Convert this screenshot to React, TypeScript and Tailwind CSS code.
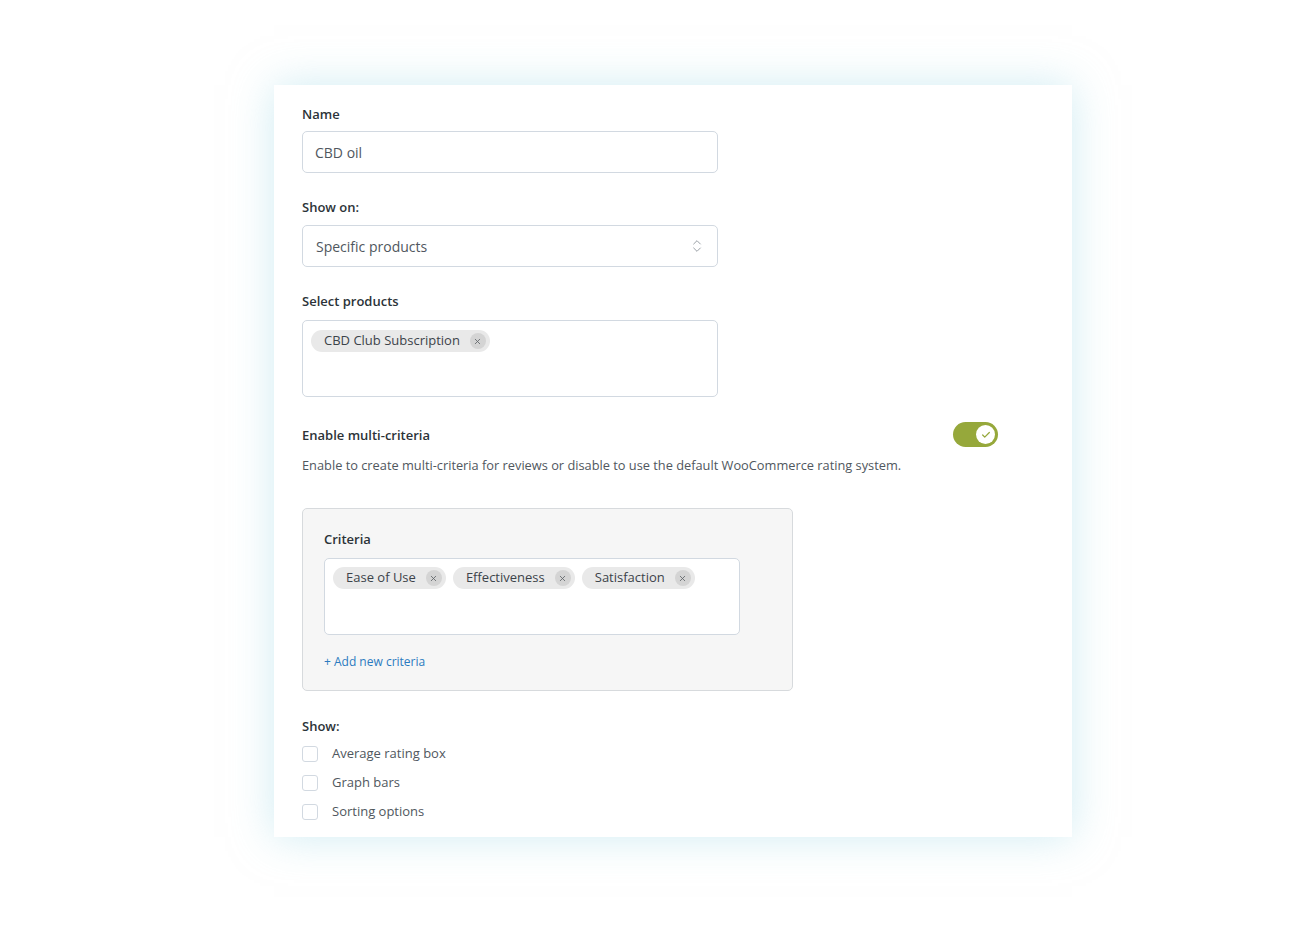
import { Check, ChevronsUpDown, X } from 'lucide-react';

const font = { fontFamily: '"Open Sans", "Noto Sans", sans-serif' };

function Chip({ label }: { label: string }) {
  return (
    <span className="inline-flex h-[22px] items-center rounded-full bg-[#e9e9e9] pl-[13px] pr-[4px] text-[13px] text-[#3c434a]">
      {label}
      <span className="ml-[10px] flex h-[16px] w-[16px] items-center justify-center rounded-full bg-[#d4d4d4] text-[#5f6367]">
        <X className="h-[9px] w-[9px]" strokeWidth={2.2} />
      </span>
    </span>
  );
}

function FieldLabel({ children }: { children: React.ReactNode }) {
  return <div className="h-[18px] text-[13px] font-semibold leading-[18px] text-[#2c3338]">{children}</div>;
}

export default function App() {
  const criteria = ['Ease of Use', 'Effectiveness', 'Satisfaction'];
  const showOptions = ['Average rating box', 'Graph bars', 'Sorting options'];

  return (
    <div className="min-h-[929px] bg-white pt-[85px]" style={font}>
      <div className="ml-[274px] w-[798px] bg-white px-[28px] pb-[11px] pt-[20px] shadow-[0_0_40px_rgba(170,220,232,0.55)]">
        {/* Name */}
        <FieldLabel>Name</FieldLabel>
        <div className="mt-[8px] flex h-[42px] w-[416px] items-center rounded-[5px] border border-[#d2d9e1] px-[12px] text-[14px] text-[#50575e]">
          CBD oil
        </div>

        {/* Show on */}
        <div className="mt-[25px]">
          <FieldLabel>Show on:</FieldLabel>
        </div>
        <div className="mt-[9px] flex h-[42px] w-[416px] items-center justify-between rounded-[5px] border border-[#d2d9e1] pl-[13px] pr-[12px] text-[14px] text-[#50575e]">
          Specific products
          <ChevronsUpDown className="h-[16px] w-[16px] text-[#9aa0a6]" strokeWidth={1.5} />
        </div>

        {/* Select products */}
        <div className="mt-[25px]">
          <FieldLabel>Select products</FieldLabel>
        </div>
        <div className="mt-[10px] flex h-[77px] w-[416px] items-start rounded-[5px] border border-[#d2d9e1] px-[8px] pt-[9px]">
          <Chip label="CBD Club Subscription" />
        </div>

        {/* Multi-criteria */}
        <div className="mt-[25px] flex w-[696px] items-center justify-between">
          <FieldLabel>Enable multi-criteria</FieldLabel>
          <div className="flex h-[25px] w-[45px] items-center justify-end rounded-full bg-[#96a83b] pr-[3px]">
            <span className="flex h-[19px] w-[19px] items-center justify-center rounded-full bg-white text-[#96a83b]">
              <Check className="h-[10px] w-[10px]" strokeWidth={3} />
            </span>
          </div>
        </div>
        <p className="mt-[9px] text-[12.8px] leading-[18px] text-[#50575e]">
          Enable to create multi-criteria for reviews or disable to use the default WooCommerce rating system.
        </p>

        {/* Criteria */}
        <div className="mt-[34px] h-[183px] w-[491px] rounded-[5px] border border-[#d7dadd] bg-[#f6f6f6] px-[21px] pt-[21px]">
          <FieldLabel>Criteria</FieldLabel>
          <div className="mt-[10px] flex h-[77px] w-[416px] items-start gap-[7px] rounded-[5px] border border-[#d2d9e1] bg-white px-[8px] pt-[8px]">
            {criteria.map((c) => (
              <Chip key={c} label={c} />
            ))}
          </div>
          <div className="mt-[18px] h-[18px] text-[12px] leading-[18px] text-[#2b7bc0]">+ Add new criteria</div>
        </div>

        {/* Show */}
        <div className="mt-[26px]">
          <FieldLabel>Show:</FieldLabel>
        </div>
        <div className="mt-[4px]">
          {showOptions.map((o) => (
            <label key={o} className="flex h-[29px] items-center gap-[14px] text-[13px] text-[#50575e]">
              <span className="h-[16px] w-[16px] rounded-[3px] border border-[#d2d9e1] bg-white" />
              {o}
            </label>
          ))}
        </div>
      </div>
    </div>
  );
}
